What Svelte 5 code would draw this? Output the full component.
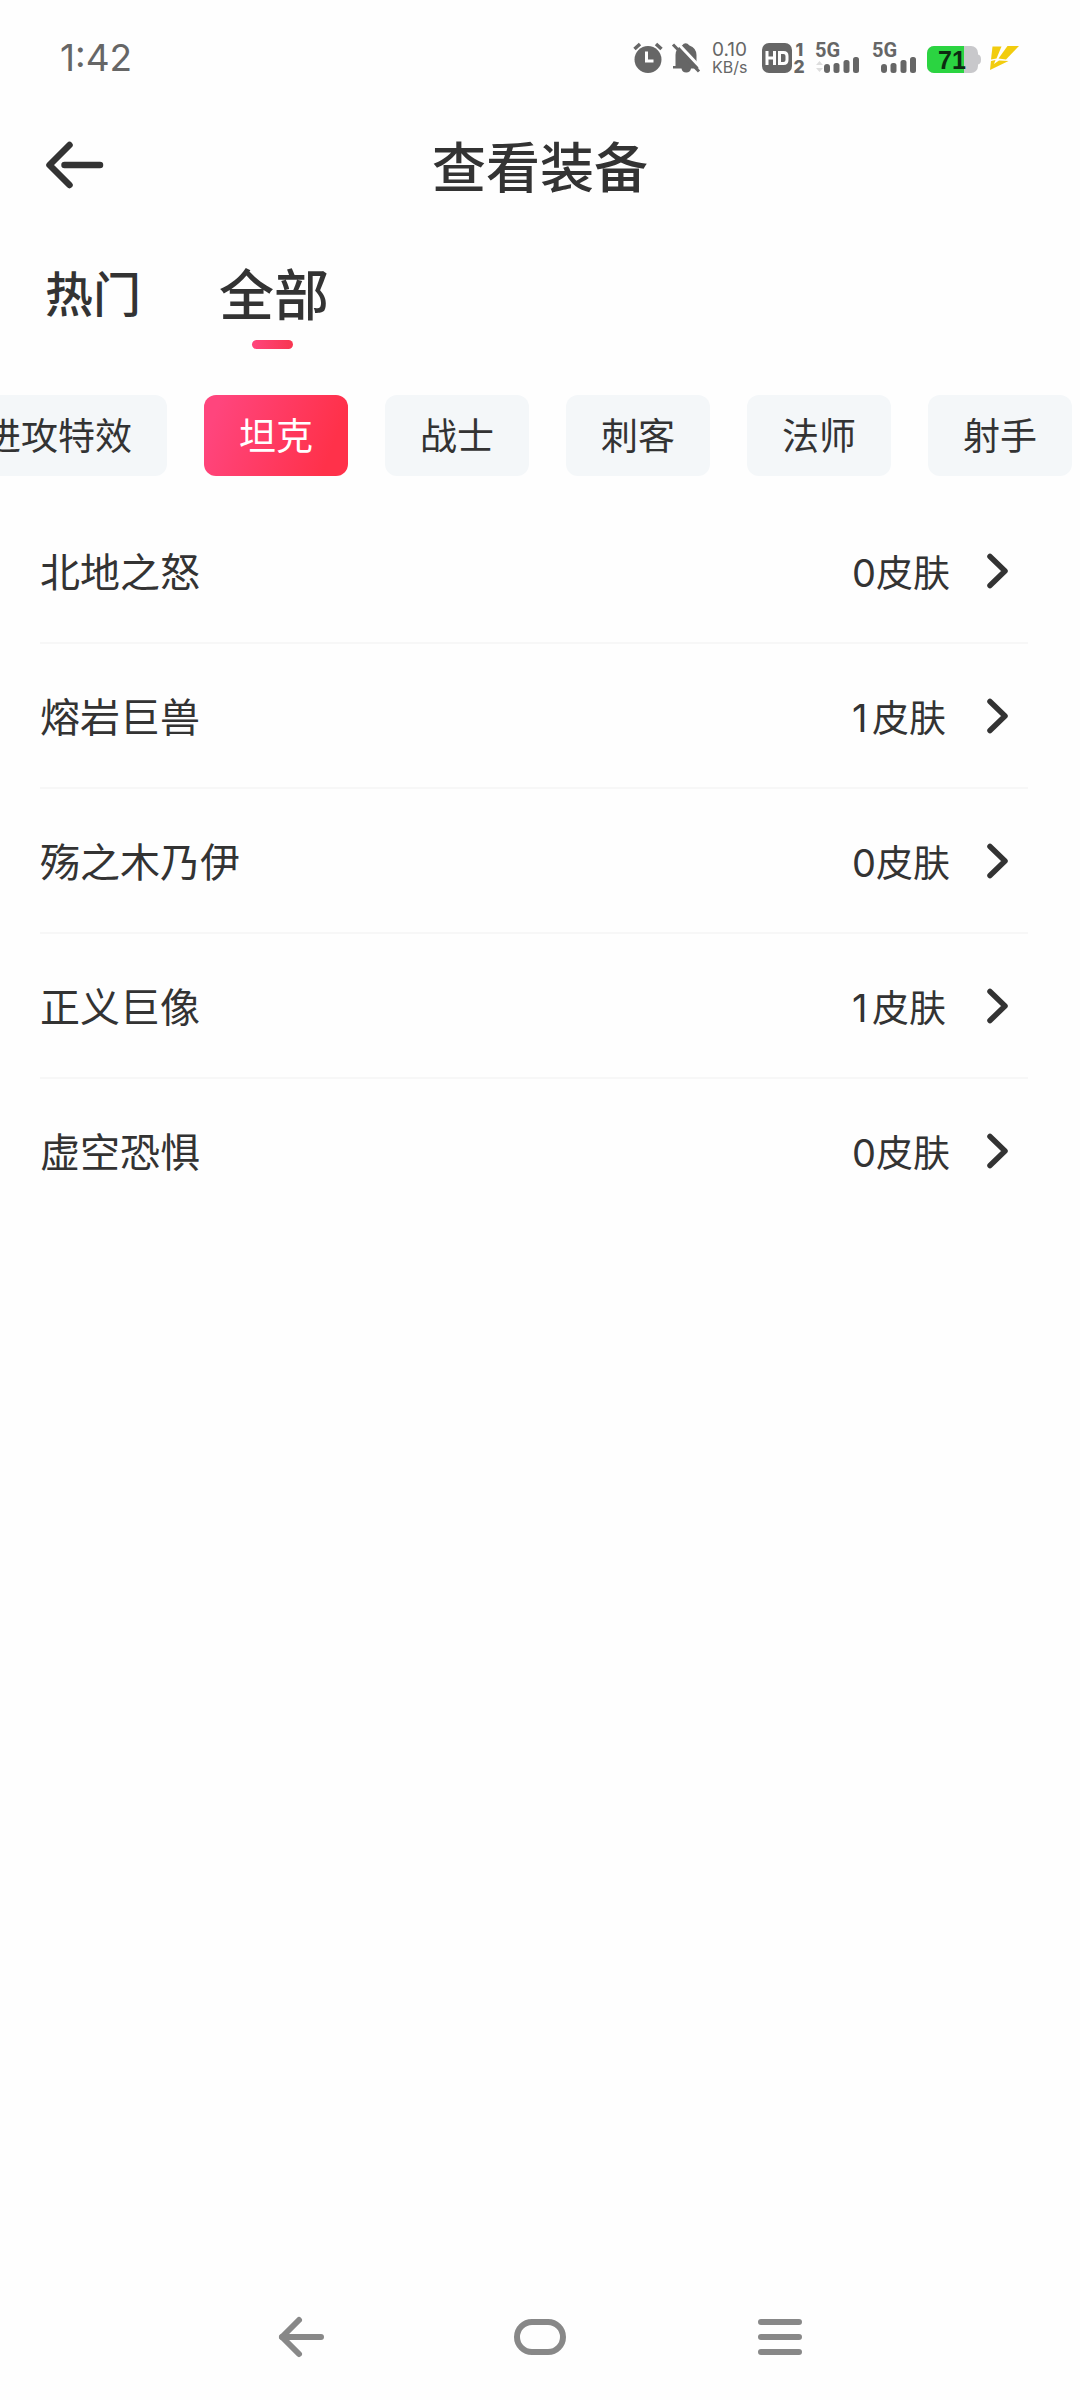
<script>
    let tabs = ['热门', '全部'];
    let activeTab = '全部';

    let categories = ['进攻特效', '坦克', '战士', '刺客', '法师', '射手'];
    let activeCategory = '坦克';

    let items = [
        { name: '北地之怒', skins: 0 },
        { name: '熔岩巨兽', skins: 1 },
        { name: '殇之木乃伊', skins: 0 },
        { name: '正义巨像', skins: 1 },
        { name: '虚空恐惧', skins: 0 }
    ];
</script>

<div class="app">
    <div class="status-bar">
        <span class="time">1:42</span>
        <div class="status-icons">
            <svg class="alarm" width="30" height="32" viewBox="0 0 30 32">
                <circle cx="15" cy="17.5" r="13.5" fill="#666" />
                <path d="M1.5 7L7 2M28.5 7L23 2" stroke="#666" stroke-width="3.5" />
                <path d="M13.5 9.5V19H20.5" fill="none" stroke="#fff" stroke-width="3" />
            </svg>
            <svg class="bell" width="28" height="32" viewBox="0 0 28 32">
                <path d="M3.5 24V13a10.5 10.5 0 0 1 6.5-9.5q3.5-4.5 7.5 0a10.5 10.5 0 0 1 7 9.5v8l2 3v2.5H19a4.8 4.8 0 0 1-9.5 0H1V24z" fill="#666" />
                <path d="M4.5 0L29.5 26.5" stroke="#fff" stroke-width="3" />
                <path d="M1 2.5L27 29.5" stroke="#666" stroke-width="3" />
            </svg>
            <div class="speed">
                <span class="rate">0.10</span>
                <span class="unit">KB/s</span>
            </div>
            <svg class="hd" width="43" height="32" viewBox="0 0 43 32">
                <rect x="0" y="1" width="30" height="30" rx="7" fill="#666" />
                <path d="M5 9V23M12.5 9V23M5 16H12.5M17.5 10.5h4q3.5 0 3.5 3.5v4q0 3.5-3.5 3.5h-4z" fill="none" stroke="#fff" stroke-width="3" />
                <text x="33.5" y="13.5" class="sim">1</text>
                <text x="31.5" y="31" class="sim">2</text>
            </svg>
            {#each [true, false] as active}
            <svg class="signal" width="46" height="32" viewBox="0 0 46 32">
                <text x="0" y="15" class="net">5G</text>
                {#if active}
                <path d="M1 23l3.5-4 3.5 4zM1 26h7l-3.5 4z" fill="#ddd" />
                {/if}
                <rect x="9" y="22" width="6" height="9" rx="3" fill="#666" />
                <rect x="18.5" y="21" width="6" height="10" rx="2.5" fill="#666" />
                <rect x="28.5" y="18" width="6" height="13" rx="2.5" fill="#666" />
                <rect x="38" y="15" width="6" height="16" rx="2.5" fill="#666" />
            </svg>
            {/each}
            <svg class="battery" width="54" height="32" viewBox="0 0 54 32">
                <rect x="0" y="4" width="51" height="27" rx="7" fill="#c8c8cb" />
                <path d="M37 4H7a7 7 0 0 0-7 7v13a7 7 0 0 0 7 7h30z" fill="#2bd441" />
                <path d="M51 12.5q3 .5 3 5t-3 5z" fill="#c8c8cb" />
                <text x="25" y="27" class="percent">71</text>
            </svg>
            <svg class="bolt" width="30" height="32" viewBox="0 0 30 32">
                <path d="M3.5 4.5H12.5L7.500 16.5L2 17.5z" fill="#f2cc0e" />
                <path d="M18.5 4H30L17 17.5L9.5 16.5z" fill="#f2cc0e" />
                <path d="M2 19L6.5 18L5 22L10 18.5L19.5 19L1 28z" fill="#f2cc0e" />
            </svg>
        </div>
    </div>

    <div class="header">
        <button class="back" aria-label="返回">
            <svg width="58" height="48" viewBox="0 0 58 48">
                <path d="M23.5 4L3.5 24L23.5 44M18.5 24H54" />
            </svg>
        </button>
        <h1>查看装备</h1>
    </div>

    <div class="tabs">
        {#each tabs as tab}
        <button class="tab" class:active={tab === activeTab}>{tab}</button>
        {/each}
    </div>

    <div class="categories">
        {#each categories as category}
        <button class="chip" class:active={category === activeCategory}>{category}</button>
        {/each}
    </div>

    <div class="list">
        {#each items as item}
        <div class="row">
            <span class="name">{item.name}</span>
            <span class="count"><span class="digit">{item.skins}</span>皮肤</span>
            <svg width="22" height="36" viewBox="0 0 22 36">
                <path d="M3 3.5L18 18L3 32.5" />
            </svg>
        </div>
        {/each}
    </div>

    <div class="nav-bar">
        <svg width="52" height="42" viewBox="0 0 52 42">
            <path d="M25 4L8 21L25 38" stroke-width="6" />
            <path d="M8 21H47" stroke-width="6" />
        </svg>
        <svg width="52" height="42" viewBox="0 0 52 42">
            <rect x="3" y="6" width="46" height="30" rx="15" stroke-width="6" />
        </svg>
        <svg width="52" height="42" viewBox="0 0 52 42">
            <path d="M7 6H45M7 21H45M7 36H45" stroke-width="6" />
        </svg>
    </div>
</div>

<style>
    :global(body) {
        background: #fefefe;
    }
    .app {
        width: 1080px;
        height: 2400px;
        overflow: hidden;
        display: flex;
        flex-direction: column;
        color: #333;
        font-family: 'Noto Sans CJK SC', sans-serif;
    }
    button {
        border: 0;
        padding: 0;
        background: none;
        color: inherit;
        font-family: inherit;
    }
    svg {
        display: block;
        flex: none;
        overflow: visible;
    }

    .status-bar {
        height: 116px;
        box-sizing: border-box;
        padding: 0 61px 0 60px;
        display: flex;
        justify-content: space-between;
        align-items: center;
        color: #666;
        font-family: Inter, sans-serif;
    }
    .time {
        font-size: 37px;
        line-height: 44px;
    }
    .status-icons {
        display: flex;
        align-items: center;
    }
    .bell {
        margin-left: 9px;
    }
    .speed {
        width: 38px;
        margin-left: 12px;
        display: flex;
        flex-direction: column;
        white-space: nowrap;
    }
    .rate {
        font-size: 19px;
        line-height: 18px;
    }
    .unit {
        font-size: 16px;
        line-height: 16px;
    }
    .hd {
        margin-left: 12px;
    }
    .sim {
        font: 800 17.5px Inter, sans-serif;
        fill: #666;
    }
    .signal {
        margin-left: 11px;
    }
    .hd + .signal {
        margin-left: 10px;
    }
    .net {
        font: 700 20px Roboto, sans-serif;
        fill: #666;
    }
    .battery {
        margin-left: 9px;
    }
    .percent {
        font: 700 25px 'Liberation Sans', sans-serif;
        text-anchor: middle;
        fill: #0d2a10;
    }
    .bolt {
        margin-left: 8px;
    }

    .header {
        height: 98px;
        padding: 0 46px;
        display: grid;
        grid-template-columns: 58px 1fr 58px;
        align-items: center;
    }
    .back path {
        fill: none;
        stroke: #333;
        stroke-width: 6.5;
        stroke-linecap: round;
        stroke-linejoin: round;
    }
    h1 {
        margin: 0;
        font-size: 54px;
        font-weight: 500;
        line-height: 80px;
        text-align: center;
    }

    .tabs {
        height: 181px;
        box-sizing: border-box;
        padding: 37px 45px 0;
        display: flex;
        align-items: flex-start;
        gap: 78px;
    }
    .tab {
        font-size: 48px;
        font-weight: 500;
        line-height: 80px;
    }
    .tab.active {
        font-size: 55px;
        display: flex;
        flex-direction: column;
        align-items: center;
    }
    .tab.active::after {
        content: '';
        width: 41px;
        height: 9px;
        margin: 9px 3px 0 0;
        border-radius: 5px;
        background: linear-gradient(90deg, #ff457d, #f83650);
    }

    .categories {
        display: flex;
        justify-content: flex-end;
        gap: 37px;
        padding-right: 8px;
    }
    .chip {
        flex: none;
        height: 81px;
        padding: 0 35px 3px;
        border-radius: 12px;
        background: #f4f7f9;
        font-size: 37px;
        line-height: 78px;
        white-space: nowrap;
    }
    .chip.active {
        color: #fff;
        background: linear-gradient(110deg, #ff457d 10%, #ff314a 85%);
    }

    .list {
        margin-top: 23px;
        padding: 0 52px 0 40px;
    }
    .row {
        height: 145px;
        box-sizing: border-box;
        padding-right: 19px;
        display: flex;
        align-items: center;
        border-bottom: 2px solid #f7f7f7;
    }
    .row:last-child {
        border-bottom-color: transparent;
    }
    .name {
        flex: 1;
        padding-bottom: 2px;
        font-size: 40px;
    }
    .count {
        width: 135px;
        font-size: 37px;
        white-space: nowrap;
    }
    .digit {
        display: inline-block;
        min-width: 20px;
        font-family: Inter, sans-serif;
        font-size: 38px;
    }
    .row path {
        fill: none;
        stroke: #333;
        stroke-width: 5.5;
        stroke-linecap: round;
        stroke-linejoin: round;
    }

    .nav-bar {
        margin-top: auto;
        height: 126px;
        box-sizing: border-box;
        padding: 0 274px;
        display: flex;
        justify-content: space-between;
        align-items: center;
    }
    .nav-bar svg {
        fill: none;
        stroke: #888;
        stroke-linecap: round;
        stroke-linejoin: round;
    }
</style>
